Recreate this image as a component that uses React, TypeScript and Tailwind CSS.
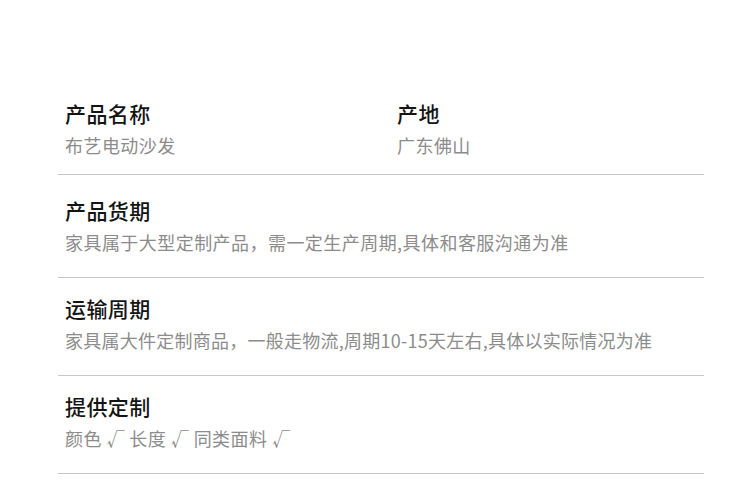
export default function App() {
  const font = { fontFamily: '"Noto Sans CJK SC", "Noto Sans", sans-serif' };
  const t = "text-[21px] leading-[30px] font-medium text-[#141414] tracking-[0.4px]";
  const s = "mt-[2px] text-[18px] leading-[30px] text-[#8c8c8c] tracking-[0.45px]";
  const s2 = "mt-[2px] text-[18px] leading-[30px] text-[#8c8c8c] tracking-[0.25px]";
  return (
    <div className="w-[750px] h-[485px] bg-white overflow-hidden" style={font}>
      <div className="ml-[58px] w-[646px] pt-[98px]">
        <div className="flex border-b border-[#c6c6c6] pb-[14px]">
          <div className="w-[339px] pl-[7px]">
            <div className={t}>产品名称</div>
            <div className={s}>布艺电动沙发</div>
          </div>
          <div>
            <div className={t}>产地</div>
            <div className={s}>广东佛山</div>
          </div>
        </div>
        <div className="border-b border-[#c6c6c6] pl-[7px] pt-[20px] pb-[20px]">
          <div className={t}>产品货期</div>
          <div className={s}>家具属于大型定制产品，需一定生产周期,具体和客服沟通为准</div>
        </div>
        <div className="border-b border-[#c6c6c6] pl-[7px] pt-[15px] pb-[20px]">
          <div className={t}>运输周期</div>
          <div className={s2}>家具属大件定制商品，一般走物流,周期10-15天左右,具体以实际情况为准</div>
        </div>
        <div className="border-b border-[#c6c6c6] pl-[7px] pt-[15px] pb-[20px]">
          <div className={t}>提供定制</div>
          <div className={s}>颜色 √ 长度 √ 同类面料 √</div>
        </div>
      </div>
    </div>
  );
}
